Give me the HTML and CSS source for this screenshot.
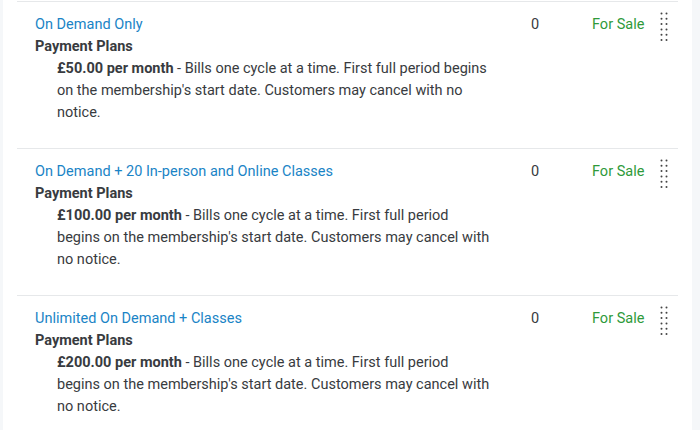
FILE: index.html
```html
<!DOCTYPE html>
<html>
<head>
<meta charset="utf-8">
<link rel="stylesheet" href="styles.css">
</head>
<body>
<div class="card">
  <div class="row">
    <div class="main">
      <a class="title">On Demand Only</a>
      <div class="label">Payment Plans</div>
      <div class="desc"><b>£50.00 per month</b> - Bills one cycle at a time. First full period begins on the membership's start date. Customers may cancel with no notice.</div>
    </div>
    <div class="count">0</div>
    <div class="status">For Sale</div>
    <div class="handle"><svg width="8" height="30" viewBox="0 0 8 30"><g fill="#444"><circle cx="1.5" cy="1.5" r="1"/><circle cx="6.5" cy="1.5" r="1"/><circle cx="1.5" cy="6.8" r="1"/><circle cx="6.5" cy="6.8" r="1"/><circle cx="1.5" cy="12.1" r="1"/><circle cx="6.5" cy="12.1" r="1"/><circle cx="1.5" cy="17.4" r="1"/><circle cx="6.5" cy="17.4" r="1"/><circle cx="1.5" cy="22.7" r="1"/><circle cx="6.5" cy="22.7" r="1"/><circle cx="1.5" cy="28" r="1"/><circle cx="6.5" cy="28" r="1"/></g></svg></div>
  </div>
  <div class="row">
    <div class="main">
      <a class="title">On Demand + 20 In-person and Online Classes</a>
      <div class="label">Payment Plans</div>
      <div class="desc"><b>£100.00 per month</b> - Bills one cycle at a time. First full period begins on the membership's start date. Customers may cancel with no notice.</div>
    </div>
    <div class="count">0</div>
    <div class="status">For Sale</div>
    <div class="handle"><svg width="8" height="30" viewBox="0 0 8 30"><g fill="#444"><circle cx="1.5" cy="1.5" r="1"/><circle cx="6.5" cy="1.5" r="1"/><circle cx="1.5" cy="6.8" r="1"/><circle cx="6.5" cy="6.8" r="1"/><circle cx="1.5" cy="12.1" r="1"/><circle cx="6.5" cy="12.1" r="1"/><circle cx="1.5" cy="17.4" r="1"/><circle cx="6.5" cy="17.4" r="1"/><circle cx="1.5" cy="22.7" r="1"/><circle cx="6.5" cy="22.7" r="1"/><circle cx="1.5" cy="28" r="1"/><circle cx="6.5" cy="28" r="1"/></g></svg></div>
  </div>
  <div class="row">
    <div class="main">
      <a class="title">Unlimited On Demand + Classes</a>
      <div class="label">Payment Plans</div>
      <div class="desc"><b>£200.00 per month</b> - Bills one cycle at a time. First full period begins on the membership's start date. Customers may cancel with no notice.</div>
    </div>
    <div class="count">0</div>
    <div class="status">For Sale</div>
    <div class="handle"><svg width="8" height="30" viewBox="0 0 8 30"><g fill="#444"><circle cx="1.5" cy="1.5" r="1"/><circle cx="6.5" cy="1.5" r="1"/><circle cx="1.5" cy="6.8" r="1"/><circle cx="6.5" cy="6.8" r="1"/><circle cx="1.5" cy="12.1" r="1"/><circle cx="6.5" cy="12.1" r="1"/><circle cx="1.5" cy="17.4" r="1"/><circle cx="6.5" cy="17.4" r="1"/><circle cx="1.5" cy="22.7" r="1"/><circle cx="6.5" cy="22.7" r="1"/><circle cx="1.5" cy="28" r="1"/><circle cx="6.5" cy="28" r="1"/></g></svg></div>
  </div>
</div>
</body>
</html>
```
FILE: styles.css
```css
html, body {
  margin: 0;
  padding: 0;
  background: #f5f7f9;
  height: 430px;
  overflow: hidden;
}
body {
  font-family: Roboto, "Liberation Sans", Arial, sans-serif;
  font-size: 14.5px;
  line-height: 22px;
  color: #383b40;
}
.card {
  margin-left: 3px;
  width: 689px;
  height: 430px;
  background: #fff;
  padding: 1px 14px 0 14px;
  box-sizing: border-box;
}
.row {
  display: grid;
  grid-template-columns: 496px 61px 68px 8px;
  border-top: 1px solid #e6e8ea;
  padding: 12px 10px 24px 18px;
}
.main {
  padding-right: 40px;
}
.title {
  display: block;
  color: #1a84c6;
  text-decoration: none;
}
.label {
  font-weight: bold;
}
.desc {
  padding-left: 22px;
}
.desc b {
  font-weight: bold;
}
.status {
  color: #2e9a3a;
}
.handle svg {
  display: block;
  margin-top: -2px;
}
```
